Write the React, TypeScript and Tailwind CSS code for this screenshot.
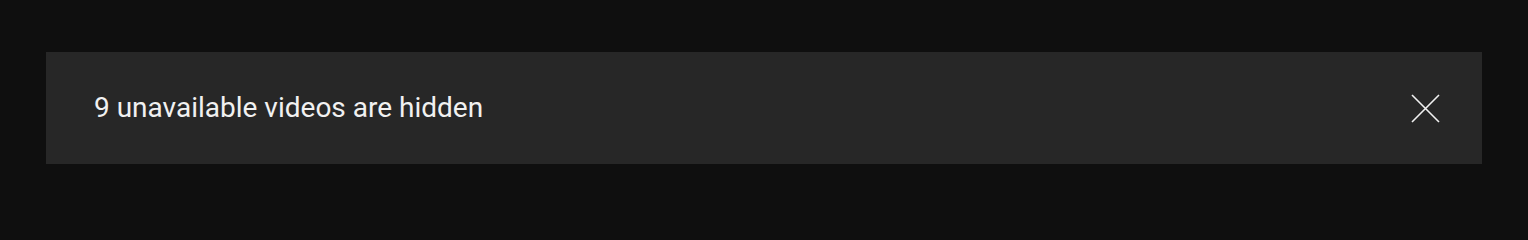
export default function App() {
  return (
    <div className="min-h-screen h-[212px] w-full bg-[#0f0f0f] px-[46px] pt-[52px]" style={{ fontFamily: 'Roboto, "Noto Sans", sans-serif' }}>
      <div className="flex h-[112px] items-center justify-between bg-[#272727] pl-[48px] pr-[42px]">
        <span className="text-[28px] leading-[36px] text-[#f1f1f1]">9 unavailable videos are hidden</span>
        <button className="flex h-[29px] w-[29px] items-center justify-center" aria-label="Dismiss">
          <svg width="29" height="29" viewBox="0 0 29 29" fill="none">
            <path d="M1 1L28 28M28 1L1 28" stroke="#f1f1f1" strokeWidth="1.6" />
          </svg>
        </button>
      </div>
    </div>
  );
}
